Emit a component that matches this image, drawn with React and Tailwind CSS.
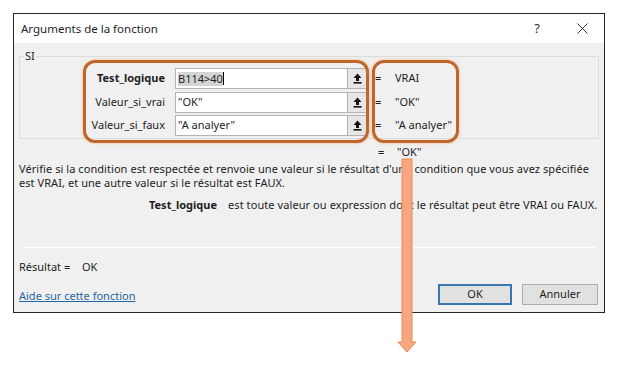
import React from "react";

const font = { fontFamily: '"Noto Sans", "Open Sans", sans-serif' };

const args = [
  { name: "Test_logique", value: "B114>40", result: "VRAI", bold: true, selected: true },
  { name: "Valeur_si_vrai", value: '"OK"', result: '"OK"' },
  { name: "Valeur_si_faux", value: '"A analyer"', result: '"A analyer"' },
];

// small "collapse dialog" arrow drawn on the ref buttons
const RefIcon = () => (
  <svg width="9" height="11" viewBox="0 0 9 11">
    <path d="M4.5 0.5 L8.5 5 L6 5 L6 8 L3 8 L3 5 L0.5 5 Z" fill="#111" />
    <rect x="0.5" y="9" width="8" height="1.6" fill="#111" />
  </svg>
);

const ArgRow = ({ arg }) => (
  <div className="flex items-center h-[21px]">
    <div
      className={`w-[145px] text-right text-[11px] text-[#1e1e1e] ${
        arg.bold ? "font-bold" : ""
      }`}
    >
      {arg.name}
    </div>
    <div className="ml-[10px] flex h-[21px]">
      <div className="w-[173px] h-full bg-white border border-[#b4b4b4] flex items-center pl-[2px] text-[11px] text-[#1e1e1e]">
        {arg.selected ? (
          <>
            <span className="bg-[#d4d4d4] leading-[14px]">{arg.value}</span>
            <span className="w-px h-[13px] bg-black" />
          </>
        ) : (
          arg.value
        )}
      </div>
      <div className="w-[19px] h-full bg-[#e6e6e6] border border-l-0 border-[#b4b4b4] flex items-center justify-center">
        <RefIcon />
      </div>
    </div>
    <div className="ml-[8px] w-[20px] text-[11px] text-[#1e1e1e]">=</div>
    <div className="text-[11px] text-[#1e1e1e]">{arg.result}</div>
  </div>
);

export default function App() {
  return (
    <div className="relative w-[617px] h-[365px] bg-white pl-[13px] pt-[13px]" style={font}>
      <div className="w-[592px] h-[300px] border border-[#262626] flex flex-col">
        {/* title bar */}
        <div className="h-[29px] bg-white flex items-center pl-[7px] pr-[16px] shrink-0">
          <span className="text-[11.5px] text-[#1e1e1e]">Arguments de la fonction</span>
          <span className="ml-auto text-[13px] text-[#333]">?</span>
          <svg className="ml-[37px]" width="11" height="11" viewBox="0 0 11 11">
            <path d="M0.5 0.5 L10.5 10.5 M10.5 0.5 L0.5 10.5" stroke="#333" strokeWidth="1" />
          </svg>
        </div>

        {/* body */}
        <div className="flex-1 bg-[#f0f0f0] px-[5px] pt-[6px] pb-[7px] flex flex-col text-[#1e1e1e]">
          <fieldset className="border border-[#dcdcdc]">
            <legend className="ml-[4px] px-[1px] text-[11px] leading-[14px]">SI</legend>
            <div className="mt-[5px] pb-[2px] flex flex-col gap-[2.5px]">
              {args.map((a) => (
                <ArgRow key={a.name} arg={a} />
              ))}
            </div>
          </fieldset>

          <div className="mt-[6px] pl-[359px] flex text-[11px] leading-[14px]">
            <span className="w-[19px]">=</span>
            <span>"OK"</span>
          </div>

          <p className="mt-[3px] text-[11px] leading-[14px] tracking-[0.06px]">
            Vérifie si la condition est respectée et renvoie une valeur si le résultat d'une condition que vous avez spécifiée
            <br />
            est VRAI, et une autre valeur si le résultat est FAUX.
          </p>

          <div className="mt-[8px] flex text-[11px] leading-[14px]">
            <span className="w-[198px] text-right font-bold">Test_logique</span>
            <span className="ml-[11px] tracking-[0.08px]">
              est toute valeur ou expression dont le résultat peut être VRAI ou FAUX.
            </span>
          </div>

          <div className="mt-[35px] mx-[3px] h-px bg-[#dadada] border-b border-white" />

          <div className="mt-[12px] flex text-[11px] leading-[14px]">
            <span className="w-[63px]">Résultat =</span>
            <span>OK</span>
          </div>

          <div className="mt-[10px] flex items-start">
            <a className="mt-[5px] text-[11px] leading-[14px] text-[#1f66a6] underline">
              Aide sur cette fonction
            </a>
            <button className="ml-auto w-[74px] h-[21px] bg-[#e1e1e1] border-2 border-[#3a76b0] text-[11px]">
              OK
            </button>
            <button className="ml-[10px] mr-[1px] w-[76px] h-[21px] bg-[#e1e1e1] border border-[#adadad] text-[11px]">
              Annuler
            </button>
          </div>
        </div>
      </div>

      {/* annotation overlays */}
      <div className="absolute left-[83px] top-[60px] w-[286px] h-[83px] rounded-[12px] border-[3px] border-[#c0652b] shadow-[0_0_3px_#f3b27f]" />
      <div className="absolute left-[372px] top-[60px] w-[87px] h-[83px] rounded-[12px] border-[3px] border-[#c0652b] shadow-[0_0_3px_#f3b27f]" />
      <svg className="absolute left-[396px] top-[157px]" width="22" height="197" viewBox="0 0 22 197">
        <path
          d="M6 2 L16 2 L16 185 L20 185 L11 195 L2 185 L6 185 Z"
          fill="#f7a67d"
          stroke="#e9895a"
          strokeWidth="1"
        />
      </svg>
    </div>
  );
}
